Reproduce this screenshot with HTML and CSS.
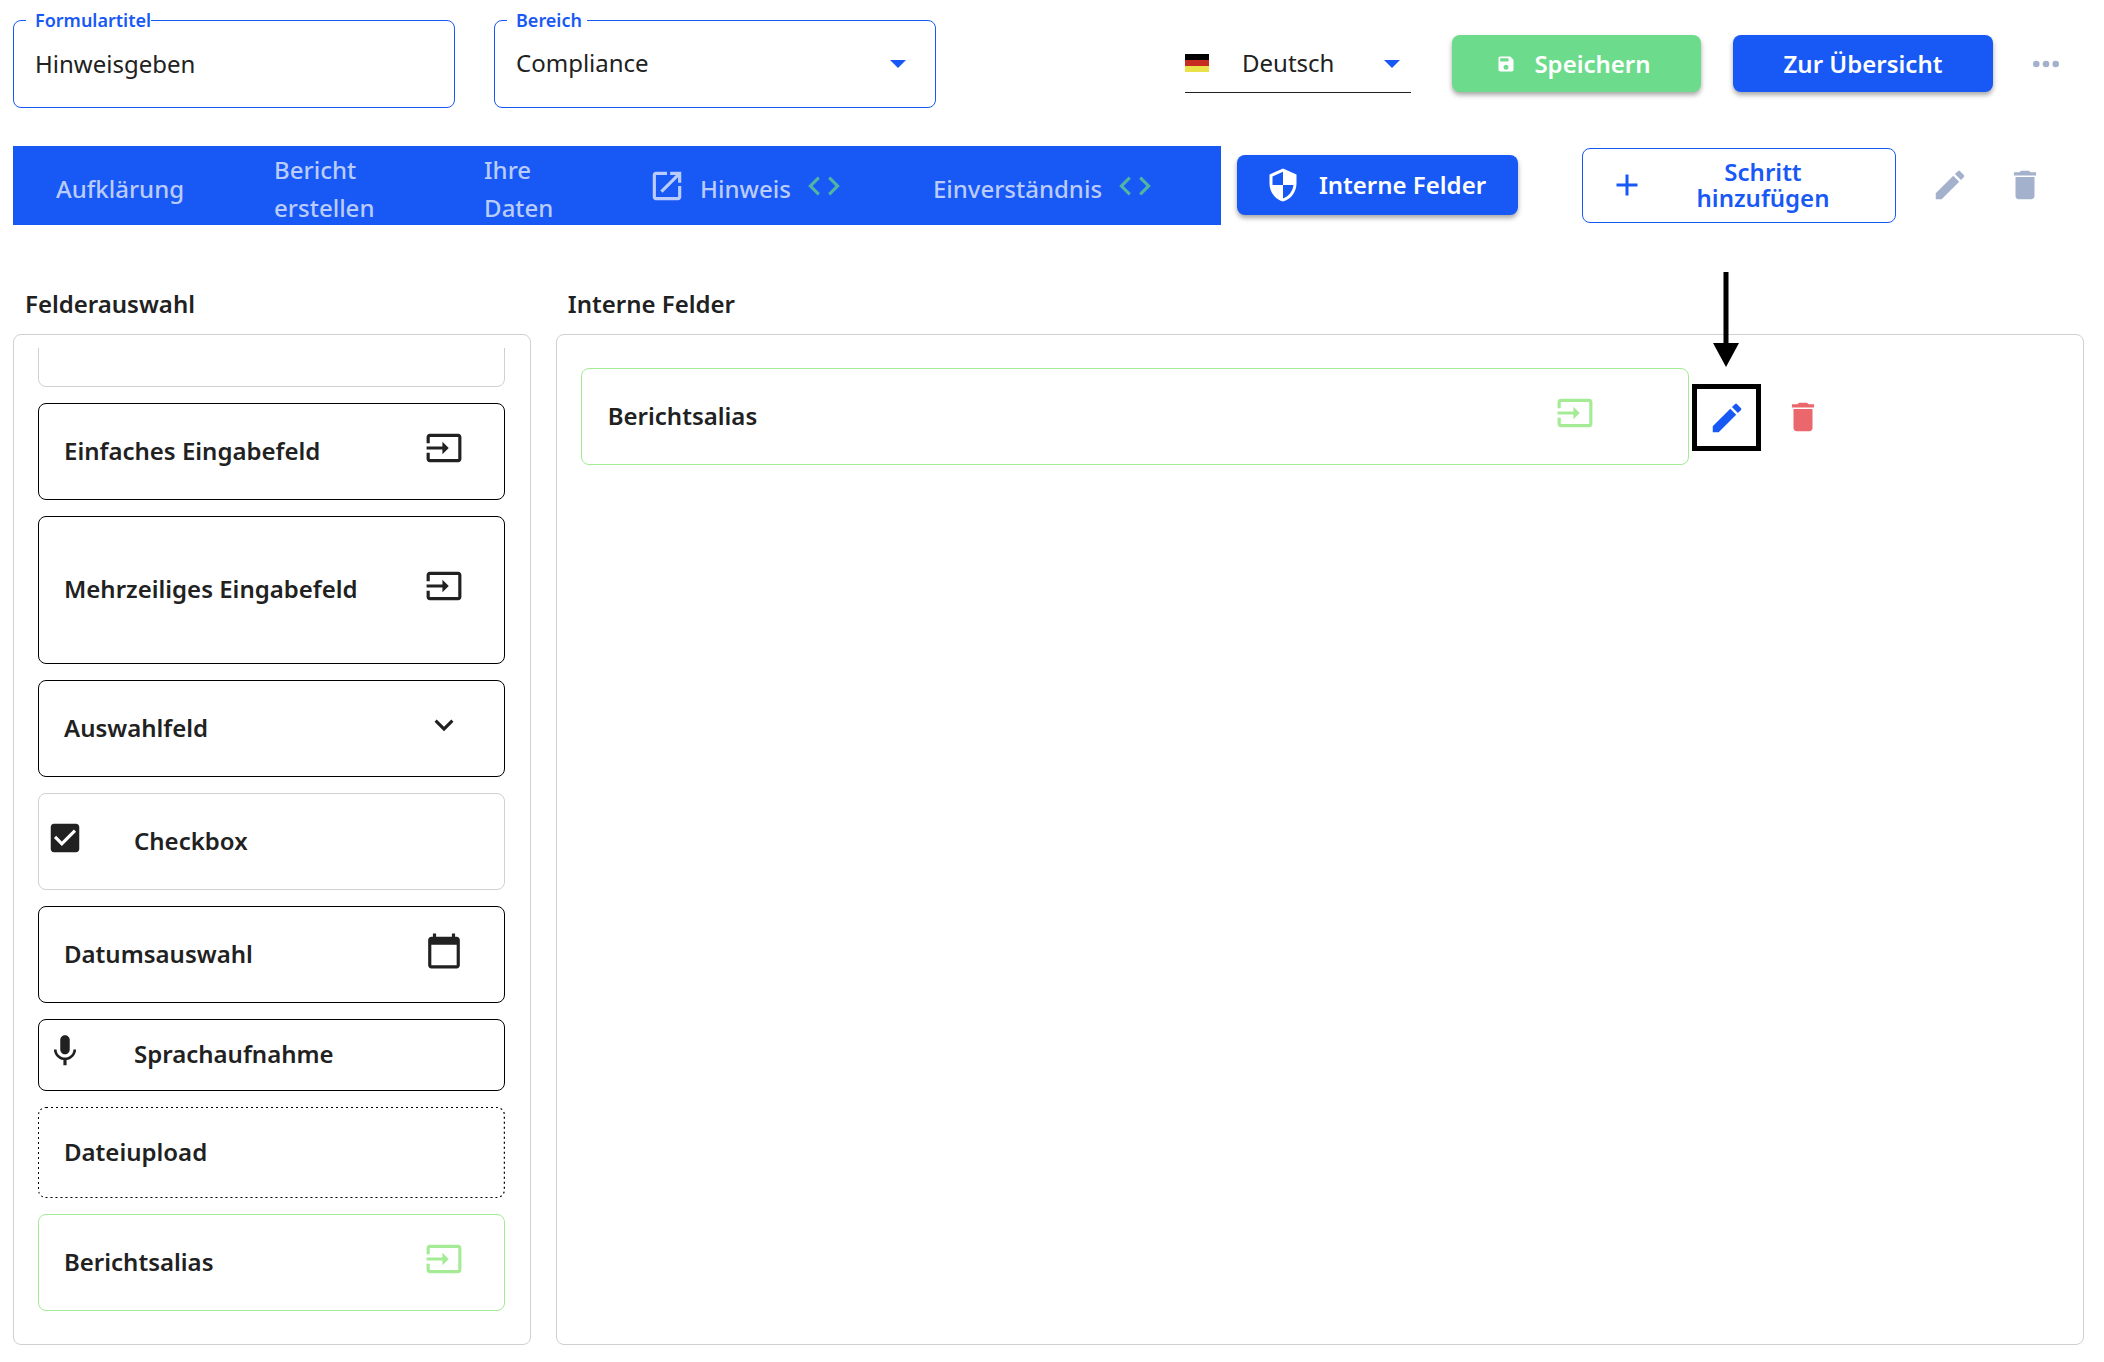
FILE: index.html
```html
<!DOCTYPE html>
<html lang="de">
<head>
<meta charset="utf-8">
<meta name="viewport" content="width=device-width, initial-scale=1">
<title>Formular bearbeiten</title>
<link rel="stylesheet" href="styles.css">
</head>
<body>
<svg class="sprite" aria-hidden="true">
  <symbol id="i-open" viewBox="0 0 24 24"><path d="M19 19H5V5h7V3H5c-1.11 0-2 .9-2 2v14c0 1.1.89 2 2 2h14c1.1 0 2-.9 2-2v-7h-2v7zM14 3v2h3.59l-9.83 9.83 1.41 1.41L19 6.41V10h2V3h-7z"/></symbol>
  <symbol id="i-code" viewBox="0 0 24 24"><path d="M9.4 16.6 4.8 12l4.6-4.6L8 6l-6 6 6 6 1.4-1.4zm5.2 0 4.6-4.6-4.6-4.6L16 6l6 6-6 6-1.4-1.4z"/></symbol>
  <symbol id="i-shield" viewBox="0 0 24 24"><path d="M12 1 3 5v6c0 5.55 3.84 10.74 9 12 5.16-1.26 9-6.45 9-12V5l-9-4zm0 10.99h7c-.53 4.12-3.28 7.79-7 8.94V12H5V6.3l7-3.11v8.8z"/></symbol>
  <symbol id="i-plus" viewBox="0 0 24 24"><path d="M19 13h-6v6h-2v-6H5v-2h6V5h2v6h6v2z"/></symbol>
  <symbol id="i-edit" viewBox="0 0 24 24"><path d="M3 17.25V21h3.75L17.81 9.94l-3.75-3.75L3 17.25zM20.71 7.04c.39-.39.39-1.02 0-1.41l-2.34-2.34c-.39-.39-1.02-.39-1.41 0l-1.83 1.83 3.75 3.75 1.83-1.83z"/></symbol>
  <symbol id="i-trash" viewBox="0 0 24 24"><path d="M6 19c0 1.1.9 2 2 2h8c1.1 0 2-.9 2-2V7H6v12zM19 4h-3.5l-1-1h-5l-1 1H5v2h14V4z"/></symbol>
  <symbol id="i-save" viewBox="0 0 24 24"><path d="M17 3H5c-1.11 0-2 .9-2 2v14c0 1.1.89 2 2 2h14c1.1 0 2-.9 2-2V7l-4-4zm-5 16c-1.66 0-3-1.34-3-3s1.34-3 3-3 3 1.34 3 3-1.34 3-3 3zm3-10H5V5h10v4z"/></symbol>
  <symbol id="i-input" viewBox="0 0 24 24"><path d="M21 3.01H3c-1.1 0-2 .9-2 2V9h2V4.99h18v14.03H3V15H1v4.01c0 1.1.9 1.98 2 1.98h18c1.1 0 2-.88 2-1.98v-14c0-1.11-.9-2-2-2zM11 16l4-4-4-4v3H1v2h10v3z"/></symbol>
  <symbol id="i-chevron" viewBox="0 0 24 24"><path d="M16.59 8.59 12 13.17 7.41 8.59 6 10l6 6 6-6z"/></symbol>
  <symbol id="i-check" viewBox="0 0 24 24"><path d="M19 3H5c-1.11 0-2 .9-2 2v14c0 1.1.89 2 2 2h14c1.11 0 2-.9 2-2V5c0-1.1-.89-2-2-2zm-9 14-5-5 1.41-1.41L10 14.17l7.59-7.59L19 8l-9 9z"/></symbol>
  <symbol id="i-calendar" viewBox="0 0 24 24"><path d="M20 3h-1V1h-2v2H7V1H5v2H4c-1.1 0-2 .9-2 2v16c0 1.1.9 2 2 2h16c1.1 0 2-.9 2-2V5c0-1.1-.9-2-2-2zm0 18H4V8h16v13z"/></symbol>
  <symbol id="i-mic" viewBox="0 0 24 24"><path d="M12 14c1.66 0 2.99-1.34 2.99-3L15 5c0-1.66-1.34-3-3-3S9 3.34 9 5v6c0 1.66 1.34 3 3 3zm5.3-3c0 3-2.54 5.1-5.3 5.1S6.7 14 6.7 11H5c0 3.41 2.72 6.23 6 6.72V21h2v-3.28c3.28-.48 6-3.3 6-6.72h-1.7z"/></symbol>
</svg>

<header class="topbar">
  <fieldset class="field">
    <legend><label for="title">Formulartitel</label></legend>
    <input id="title" type="text" value="Hinweisgeben">
  </fieldset>
  <fieldset class="field field-narrow-notch">
    <legend><label for="area">Bereich</label></legend>
    <span class="select">
      <select id="area"><option>Compliance</option></select>
      <span class="caret"></span>
    </span>
  </fieldset>
  <div class="actions">
    <span class="language">
      <svg class="flag" viewBox="0 0 24 18" aria-hidden="true"><path fill="#000" d="M0 0h24v6H0z"/><path fill="#c82d22" d="M0 6h24v6H0z"/><path fill="#ebe24a" d="M0 12h24v6H0z"/></svg>
      <span class="select">
        <select aria-label="Sprache"><option>Deutsch</option></select>
        <span class="caret"></span>
      </span>
    </span>
    <button class="btn btn-save" type="button"><svg class="icon-small"><use href="#i-save"/></svg>Speichern</button>
    <button class="btn btn-overview" type="button">Zur Übersicht</button>
    <button class="icon-btn more" type="button" aria-label="Mehr"><svg viewBox="0 0 26 8"><circle cx="3.3" cy="4" r="3.3"/><circle cx="13" cy="4" r="3.3"/><circle cx="22.7" cy="4" r="3.3"/></svg></button>
  </div>
</header>

<div class="steps">
  <nav class="tabs" aria-label="Schritte">
    <a class="tab" href="#aufklaerung">Aufklärung</a>
    <a class="tab tab-report" href="#bericht">Bericht erstellen</a>
    <a class="tab tab-data" href="#daten">Ihre Daten</a>
    <a class="tab" href="#hinweis"><svg class="icon"><use href="#i-open"/></svg>Hinweis<svg class="icon code"><use href="#i-code"/></svg></a>
    <a class="tab" href="#einverstaendnis">Einverständnis<svg class="icon code"><use href="#i-code"/></svg></a>
  </nav>
  <button class="btn btn-internal" type="button"><svg class="icon-medium"><use href="#i-shield"/></svg>Interne Felder</button>
  <button class="btn-add" type="button"><svg class="icon-medium"><use href="#i-plus"/></svg><span>Schritt hinzufügen</span></button>
  <div class="step-tools">
    <button class="icon-btn" type="button" aria-label="Schritt bearbeiten"><svg class="icon"><use href="#i-edit"/></svg></button>
    <button class="icon-btn" type="button" aria-label="Schritt löschen"><svg class="icon"><use href="#i-trash"/></svg></button>
  </div>
</div>

<main class="workspace">
  <section class="palette">
    <h2>Felderauswahl</h2>
    <div class="panel palette-panel">
      <ul class="cards">
        <li class="card muted"></li>
        <li class="card">Einfaches Eingabefeld<svg class="icon"><use href="#i-input"/></svg></li>
        <li class="card tall">Mehrzeiliges Eingabefeld<svg class="icon"><use href="#i-input"/></svg></li>
        <li class="card">Auswahlfeld<svg class="icon"><use href="#i-chevron"/></svg></li>
        <li class="card leading muted"><span class="tick"><input id="tick" type="checkbox" checked><svg class="icon"><use href="#i-check"/></svg></span><label for="tick">Checkbox</label></li>
        <li class="card">Datumsauswahl<svg class="icon"><use href="#i-calendar"/></svg></li>
        <li class="card leading short"><svg class="icon"><use href="#i-mic"/></svg>Sprachaufnahme</li>
        <li class="card upload">Dateiupload<svg class="dots" aria-hidden="true"><rect width="100%" height="100%" rx="8"/></svg></li>
        <li class="card green">Berichtsalias<svg class="icon"><use href="#i-input"/></svg></li>
      </ul>
    </div>
  </section>
  <section class="canvas">
    <h2>Interne Felder</h2>
    <div class="panel canvas-panel">
      <div class="row">
        <div class="card green">Berichtsalias<svg class="icon"><use href="#i-input"/></svg></div>
        <button class="icon-btn edit" type="button" aria-label="Feld bearbeiten">
          <svg class="icon"><use href="#i-edit"/></svg>
          <svg class="pointer" viewBox="0 0 26 95" aria-hidden="true"><path d="M10.5 0h5v71H26L13 95 0 71h10.5z"/></svg>
        </button>
        <button class="icon-btn delete" type="button" aria-label="Feld löschen"><svg class="icon"><use href="#i-trash"/></svg></button>
      </div>
    </div>
  </section>
</main>
</body>
</html>
```
FILE: styles.css
```css
:root {
  --blue: #1858f5;
  --green: #6ddb8c;
  --light-green: #a5eb96;
  --text: #212121;
  --muted: #a3b1cc;
  --line: #d0d0d0;
}

* { box-sizing: border-box; }

body {
  margin: 0;
  padding: 8px 20px 17px 13px;
  min-height: 100vh;
  display: flex;
  flex-direction: column;
  background: #fff;
  color: var(--text);
  font: 400 24px/32px "Noto Sans", "Open Sans", sans-serif;
}

button, input, select { font: inherit; color: inherit; }
button { cursor: pointer; }
svg { fill: currentColor; flex: none; display: block; }
.sprite { position: absolute; width: 0; height: 0; }
.icon { width: 38px; height: 38px; }
.icon-medium { width: 36px; height: 36px; }
.icon-small { width: 20px; height: 20px; }

/* Top bar */
.topbar {
  display: flex;
  align-items: flex-end;
  gap: 39px;
}

.field {
  flex: 0 1 442px;
  min-width: 0;
  margin: 0;
  padding: 0 12px 13px;
  border: 1px solid var(--blue);
  border-radius: 8px;
}
.field legend {
  padding: 0 0 0 9px;
  color: var(--blue);
  font-size: 18px;
  font-weight: 600;
  line-height: 24px;
}
.field-narrow-notch legend { padding-right: 5px; }
.field input, .field select {
  display: block;
  width: 100%;
  height: 62px;
  padding: 0 9px;
}
input, select {
  border: 0;
  outline: 0;
  background: none;
  appearance: none;
}

.select { position: relative; display: block; }
.caret {
  position: absolute;
  top: 50%;
  right: 17px;
  margin-top: -3px;
  border: 8px solid transparent;
  border-top-color: var(--blue);
  border-bottom: 0;
  pointer-events: none;
}

.actions {
  flex: 1;
  height: 88px;
  padding-bottom: 1px;
  display: flex;
  align-items: center;
  justify-content: flex-end;
}
.language {
  width: 226px;
  height: 59px;
  margin-right: 41px;
  display: flex;
  align-items: center;
  gap: 33px;
  border-bottom: 1px solid var(--text);
}
.language .select { flex: 1; }
.language select { width: 100%; padding: 0; }
.language .caret { right: 11px; }
.flag { width: 24px; height: 18px; }

.btn {
  display: flex;
  align-items: center;
  justify-content: center;
  border: 0;
  border-radius: 8px;
  background: var(--blue);
  color: #fff;
  font-weight: 600;
  white-space: nowrap;
  box-shadow: 0 3px 5px rgba(0, 0, 0, .35);
}
.btn-save {
  width: 249px;
  height: 57px;
  gap: 18px;
  margin-right: 32px;
  padding-right: 12px;
  background: var(--green);
}
.btn-overview { width: 260px; height: 57px; }

.icon-btn {
  padding: 0;
  border: 0;
  background: none;
  color: var(--muted);
}
.more { margin: 0 25px 0 40px; }
.more svg { width: 26px; height: 8px; }

/* Steps */
.steps {
  margin-top: 38px;
  display: flex;
  align-items: center;
}
.tabs {
  flex: 1;
  height: 79px;
  padding-top: 6px;
  display: flex;
  align-items: center;
  background: var(--blue);
}
.tab {
  flex: none;
  display: flex;
  align-items: center;
  gap: 14px;
  padding: 0 47px 0 43px;
  color: #b9ccfc;
  font-weight: 500;
  line-height: 38px;
  text-decoration: none;
}
.tab .icon { margin-bottom: 6px; }
.tab .code { color: #50b5a3; }
.tab-report { width: 210px; }
.tab-data { width: 164px; }

.btn-internal {
  width: 281px;
  height: 60px;
  margin: 0 64px 1px 16px;
  padding-right: 10px;
  gap: 18px;
}
.btn-add {
  width: 314px;
  height: 75px;
  padding: 0 26px 2px;
  display: flex;
  align-items: center;
  border: 1px solid var(--blue);
  border-radius: 8px;
  background: #fff;
  color: var(--blue);
  font-weight: 600;
  line-height: 26px;
}
.btn-add span { flex: 1; padding: 0 30px 0 42px; }
.step-tools {
  display: flex;
  gap: 37px;
  margin: 0 40px 1px 35px;
}

/* Workspace */
.workspace {
  flex: 1;
  margin-top: 63px;
  display: flex;
  gap: 25px;
}
.palette, .canvas { display: flex; flex-direction: column; }
.palette { flex: 0 0 25%; }
.canvas { flex: 1; }
h2 {
  margin: 0 0 14px;
  padding: 0 12px;
  font-size: 24px;
  font-weight: 600;
  line-height: 32px;
}
.panel {
  flex: 1;
  border: 1px solid var(--line);
  border-radius: 8px;
}
.palette-panel {
  display: flex;
  padding: 13px 25px 0 24px;
}
.cards {
  flex: 1;
  height: 0;
  min-height: 100%;
  margin: 0;
  padding: 0 0 33px;
  display: flex;
  flex-direction: column;
  justify-content: flex-end;
  gap: 16px;
  overflow: hidden;
  list-style: none;
}
.card {
  flex: none;
  height: 97px;
  padding: 0 41px 2px 25px;
  display: flex;
  align-items: center;
  justify-content: space-between;
  border: 1px solid #000;
  border-radius: 8px;
  font-weight: 600;
}
.card .icon { margin-bottom: 6px; }
.card.tall { height: 148px; }
.card.short { height: 72px; }
.card.muted { border-color: var(--line); }
.card.leading {
  justify-content: flex-start;
  gap: 50px;
  padding-left: 7px;
}
.card.upload {
  position: relative;
  height: 91px;
  border-color: transparent;
}

/* The outer half of the 2px stroke is clipped, which leaves a crisp 1px line */
.dots {
  position: absolute;
  inset: -1px;
  width: calc(100% + 2px);
  height: calc(100% + 2px);
  border-radius: 8px;
  overflow: hidden;
}
.dots rect {
  fill: none;
  stroke: #000;
  stroke-width: 2;
  stroke-dasharray: 2 3;
}
.card.green { border-color: var(--light-green); }
.card.green .icon { color: var(--light-green); }

.tick { display: grid; }
.tick > * { grid-area: 1 / 1; }
.tick input { width: 38px; height: 38px; margin: 0; }
.tick .icon { pointer-events: none; }

.canvas-panel { padding: 33px 24px; }
.row { display: flex; align-items: center; }
.row .card { flex: 0 0 75%; padding-left: 26px; padding-right: 94px; }
.edit {
  position: relative;
  width: 69px;
  height: 67px;
  margin: 2px 23px 0 3px;
  display: grid;
  place-items: center;
  border: 5px solid #000;
  color: var(--blue);
}
.pointer {
  position: absolute;
  bottom: calc(100% + 22px);
  left: 50%;
  width: 26px;
  height: 95px;
  margin-left: -14px;
  fill: #000;
}
.delete { color: #ea676b; }
```
